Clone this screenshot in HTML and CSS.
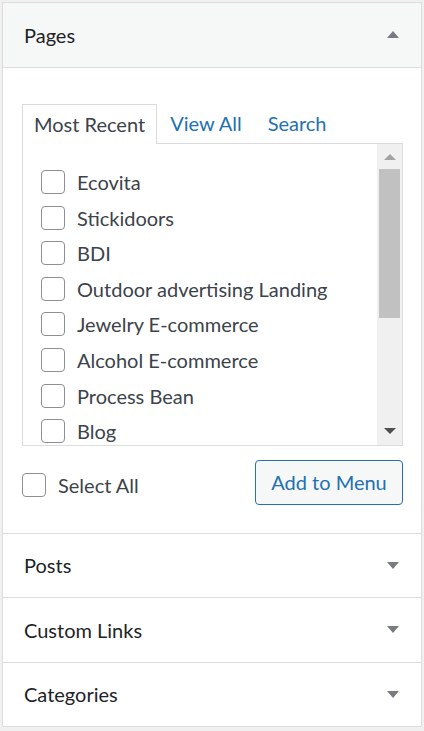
FILE: index.html
```html
<!DOCTYPE html>
<html lang="en">
<head>
    <meta charset="UTF-8">
    <meta name="viewport" content="width=device-width, initial-scale=1.0">
    <title>Add menu items</title>
    <link rel="stylesheet" href="styles.css">
</head>
<body>

    <div class="accordion">
        <div class="section open">
            <h3 class="section-title">
                Pages
                <span class="arrow up"></span>
            </h3>
            <div class="section-content">
                <ul class="tabs">
                    <li class="tab active">Most Recent</li>
                    <li class="tab"><a href="#">View All</a></li>
                    <li class="tab"><a href="#">Search</a></li>
                </ul>
                <div class="tab-panel">
                    <ul class="checklist">
                        <li><span class="checkbox"></span>Ecovita</li>
                        <li><span class="checkbox"></span>Stickidoors</li>
                        <li><span class="checkbox"></span>BDI</li>
                        <li><span class="checkbox"></span>Outdoor advertising Landing</li>
                        <li><span class="checkbox"></span>Jewelry E-commerce</li>
                        <li><span class="checkbox"></span>Alcohol E-commerce</li>
                        <li><span class="checkbox"></span>Process Bean</li>
                        <li><span class="checkbox"></span>Blog</li>
                    </ul>
                    <div class="scrollbar">
                        <span class="scroll-arrow up"></span>
                        <div class="scroll-track">
                            <div class="scroll-thumb"></div>
                        </div>
                        <span class="scroll-arrow down"></span>
                    </div>
                </div>
                <div class="actions">
                    <label class="select-all"><span class="checkbox"></span>Select All</label>
                    <button class="button">Add to Menu</button>
                </div>
            </div>
        </div>

        <div class="section">
            <h3 class="section-title">
                Posts
                <span class="arrow"></span>
            </h3>
        </div>

        <div class="section">
            <h3 class="section-title">
                Custom Links
                <span class="arrow"></span>
            </h3>
        </div>

        <div class="section">
            <h3 class="section-title">
                Categories
                <span class="arrow"></span>
            </h3>
        </div>
    </div>

</body>
</html>
```

FILE: styles.css
```css
* {
    box-sizing: border-box;
    font-family: 'Lato', 'Open Sans', sans-serif;
}

body {
    margin: 0;
    padding: 2px 2px 0 2px;
    background-color: #f0f0f1;
    color: #3c434a;
}

.accordion {
    background-color: #fff;
    border: 1px solid #dcdcde;
    width: 420px;
}

.section {
    border-bottom: 1px solid #dcdcde;
}

.section:last-child {
    border-bottom: none;
}

.section-title {
    margin: 0;
    height: 63.5px;
    padding: 0 22px 0 21px;
    display: flex;
    align-items: center;
    justify-content: space-between;
    font-size: 20px;
    font-weight: 400;
    color: #1d2327;
}

.section.open .section-title {
    background-color: #f6f7f7;
    border-bottom: 1px solid #dcdcde;
    height: 64.5px;
}

.arrow {
    width: 0;
    height: 0;
    border-left: 6px solid transparent;
    border-right: 6px solid transparent;
    border-top: 7px solid #787c82;
}

.arrow.up {
    border-top: none;
    border-bottom: 7px solid #787c82;
}

.section-content {
    padding: 36px 18px 28px 19px;
}

.tabs {
    list-style: none;
    margin: 0;
    padding: 0;
    display: flex;
    position: relative;
    z-index: 1;
}

.tab {
    height: 39px;
    padding: 0 13px;
    display: flex;
    align-items: center;
    font-size: 20px;
}

.tab a {
    color: #2271b1;
    text-decoration: none;
}

.tab.active {
    background: #fff;
    border: 1px solid #dcdcde;
    border-bottom: none;
    padding: 0 11px;
    color: #3c434a;
    height: 40px;
}

.tab-panel {
    border: 1px solid #dcdcde;
    height: 303px;
    margin-top: -1px;
    display: flex;
    overflow: hidden;
}

.checklist {
    list-style: none;
    margin: 0;
    padding: 26.5px 0 0 18px;
    flex: 1;
    overflow: hidden;
    display: flex;
    flex-direction: column;
    gap: 11.6px;
}

.checklist li,
.select-all {
    display: flex;
    align-items: center;
    gap: 12px;
    font-size: 20px;
    color: #3c434a;
    height: 24px;
    flex-shrink: 0;
}

.select-all {
    margin-top: 5px;
}

.checkbox {
    display: inline-block;
    width: 24px;
    height: 24px;
    border: 1px solid #8c8f94;
    border-radius: 4px;
    background: #fff;
    flex-shrink: 0;
}

.scrollbar {
    width: 25px;
    background: #f0f0f0;
    display: flex;
    flex-direction: column;
    align-items: center;
}

.scroll-arrow {
    width: 0;
    height: 0;
    border-left: 6px solid transparent;
    border-right: 6px solid transparent;
}

.scroll-arrow.up {
    border-bottom: 6px solid #a3a3a3;
    margin: 10px 0 9px;
}

.scroll-arrow.down {
    border-top: 6px solid #505050;
    margin: 9px 0 11px;
}

.scroll-track {
    flex: 1;
    width: 100%;
    padding: 0 2px;
}

.scroll-thumb {
    height: 149px;
    background: #c1c1c1;
}

.actions {
    display: flex;
    justify-content: space-between;
    align-items: center;
    margin-top: 14px;
}

.button {
    height: 45px;
    width: 148px;
    padding: 0;
    background: #f6f7f7;
    border: 1px solid #2271b1;
    border-radius: 4px;
    color: #2271b1;
    font-size: 20px;
}
```
